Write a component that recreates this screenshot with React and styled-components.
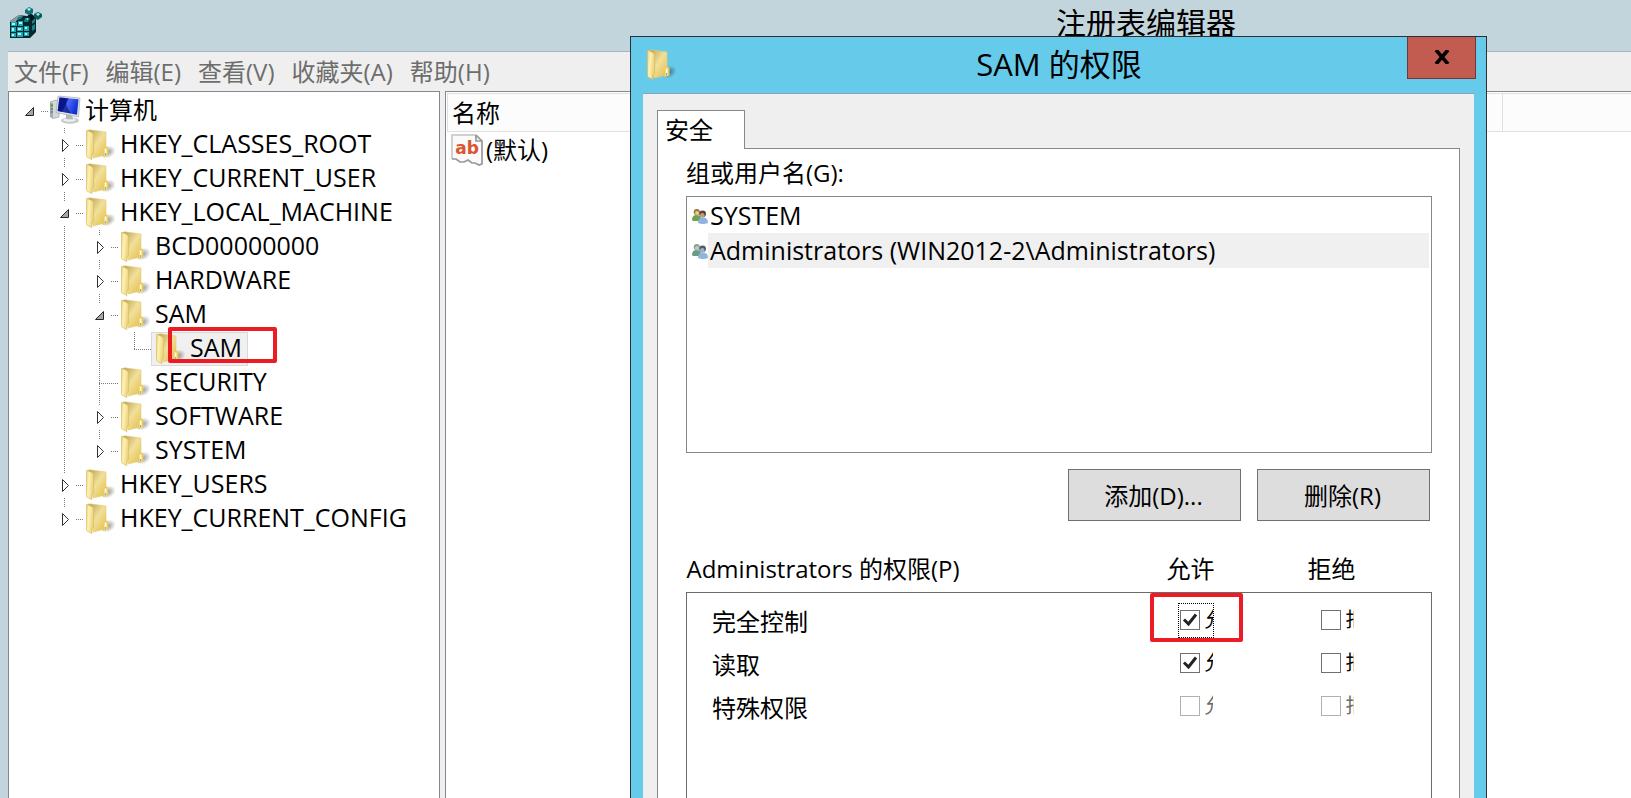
import React from "react";
import styled, { createGlobalStyle } from "styled-components";

const menus = ["文件(F)", "编辑(E)", "查看(V)", "收藏夹(A)", "帮助(H)"];

const registry = {
  name: "计算机",
  open: true,
  computer: true,
  children: [
    { name: "HKEY_CLASSES_ROOT", open: false },
    { name: "HKEY_CURRENT_USER", open: false },
    {
      name: "HKEY_LOCAL_MACHINE",
      open: true,
      children: [
        { name: "BCD00000000", open: false },
        { name: "HARDWARE", open: false },
        {
          name: "SAM",
          open: true,
          children: [{ name: "SAM", leaf: true, selected: true }],
        },
        { name: "SECURITY", leaf: true },
        { name: "SOFTWARE", open: false },
        { name: "SYSTEM", open: false },
      ],
    },
    { name: "HKEY_USERS", open: false },
    { name: "HKEY_CURRENT_CONFIG", open: false },
  ],
};

const permissions = [
  { name: "完全控制", allow: true, focused: true },
  { name: "读取", allow: true },
  { name: "特殊权限", allow: false, disabled: true },
];

function IconDefs() {
  return (
    <HiddenSvg aria-hidden="true">
      <defs>
        <linearGradient id="flap" x1="0" y1="0" x2="1" y2="0.3">
          <stop offset="0" stopColor="#e9cf74" />
          <stop offset="0.4" stopColor="#fff2b8" />
          <stop offset="1" stopColor="#ecd27a" />
        </linearGradient>
        <linearGradient id="back" x1="0" y1="0" x2="1" y2="1">
          <stop offset="0" stopColor="#b39a4c" />
          <stop offset="0.5" stopColor="#f2e09a" />
          <stop offset="1" stopColor="#e3bd45" />
        </linearGradient>
        <radialGradient id="shade">
          <stop offset="0" stopColor="#000" stopOpacity="0.4" />
          <stop offset="1" stopColor="#000" stopOpacity="0" />
        </radialGradient>
        <linearGradient id="screen" x1="0" y1="0" x2="1" y2="0.4">
          <stop offset="0" stopColor="#0a1fa8" />
          <stop offset="0.45" stopColor="#0c1cc0" />
          <stop offset="0.5" stopColor="#4d6cf0" />
          <stop offset="1" stopColor="#1230d8" />
        </linearGradient>
      </defs>
    </HiddenSvg>
  );
}

function FolderIcon() {
  return (
    <svg width="32" height="32" viewBox="-1 0 32 32" aria-hidden="true">
      <ellipse cx="22" cy="23" rx="8" ry="6" fill="url(#shade)" transform="rotate(-28 22 23)" />
      <path d="M1 1.5 L4 .8 L20 3 V26 L7 29 Z" fill="url(#back)" stroke="#e3cd7e" strokeWidth=".6" />
      <path d="M18.5 19 Q18.5 17.5 20 17.5 L21.5 18 Q22.5 18.5 22.5 20 V26.5 L17 28.3 Z" fill="#eccb59" />
      <path d="M19.6 19.5 V26.5" stroke="#fffbe6" strokeWidth="1.8" />
      <path d="M19.6 24 V26.5" stroke="#6fa6c9" strokeWidth="1" />
      <path d="M.5 2 Q.5 1 1.5 1.5 L6.5 4 Q7.6 5 7.6 6.5 V24.5 L5.8 25.5 V30.6 L1 28 Q.5 27.5 .5 26.5 Z" fill="url(#flap)" stroke="#d9bd62" strokeWidth=".7" />
    </svg>
  );
}

function ComputerIcon() {
  return (
    <svg width="32" height="32" viewBox="1 1 32 32" aria-hidden="true">
      <ellipse cx="21" cy="26.500" rx="9" ry="3.200" fill="#c4c8cb" />
      <ellipse cx="20.500" cy="25.800" rx="6.500" ry="2" fill="#eceeef" />
      <path d="M17 20 L23 20.500 L24 25.500 L17 25 Z" fill="#b3b8bb" />
      <path d="M1 8 L7 6 L10 7 V23 L4 24.500 L1 22.500 Z" fill="#d5d8da" stroke="#9ba0a3" strokeWidth=".7" />
      <path d="M1 8 L4 9 V24.500 L1 22.500 Z" fill="#a8adb0" />
      <path d="M1.500 11.500 H4" stroke="#39b02c" strokeWidth="2.200" />
      <path d="M1.500 15 H4 M1.500 18 H4" stroke="#5f6568" />
      <path d="M9 2 L31 4 L29.500 23 L7 18.500 Z" fill="#dfe3e6" stroke="#a5abb0" strokeWidth=".7" />
      <path d="M10.500 3.500 L29.500 5.300 L28 20.800 L8.700 17 Z" fill="url(#screen)" />
      <path d="M10.500 3.500 L17 4.100 Q16 12 22 19.600 L8.700 17 Z" fill="#081070" opacity=".6" />
    </svg>
  );
}

function RegistryIcon() {
  return (
    <svg width="32" height="32" viewBox="0 0 32 32" aria-hidden="true">
      <path d="M0 14 L9 8 L17 9 L21 7 L26 10 V25 L20 31 H0 Z" fill="#06282c" />
      <path d="M0 14 L9 8 L13 9 L6 14 V15 H0 Z" fill="#8c9a9c" />
      <g fill="#18a9b0">
        <path d="M1 15 H7 V19 H1 Z M8 14 H13 V19 H8 Z M1 20 H6 V25 H1 Z M7 20 H13 V24 H7 Z M14 19 H19 V24 H14 Z M1 26 H6 V30 H1 Z M7 25 H13 V30 H7 Z M14 25 H19 V29 H14 Z" />
        <path d="M8 10 L13 9 L11 12 L7 13 Z M15 11 L20 11 L18 15 L14 15 Z M22 12 L25 10 V15 L22 17 Z M22 19 L25 17 V22 L22 24 Z" fill="#12858c" />
        <path d="M15 3 L19 0 L23 2 V6 L19 8 L15 6 Z" fill="#0d7077" />
        <path d="M24 7 L28 5 L32 7 V10 L28 13 L24 11 Z" fill="#0b5b61" />
      </g>
      <g fill="#a5f8f7">
        <path d="M2 16 H5 V18 H2 Z M9 15 H12 V17 H9 Z M2 21 H4 V24 H2 Z M8 21 H11 V23 H8 Z M15 20 H17 V22 H15 Z M2 27 H4 V29 H2 Z M8 26 H11 V28 H8 Z M15 26 H17 V28 H15 Z" />
        <path d="M17 2 L19 1 L21 2 L19 4 Z M26 7 L28 6 L30 7 L28 9 Z M16 12 L18 11 V13 Z" />
      </g>
      <path d="M18 8 L22 7 L25 11 L22 14 Z" fill="#031315" />
    </svg>
  );
}

function StringValueIcon() {
  return (
    <svg width="32" height="32" viewBox="0 0 32 32" aria-hidden="true">
      <path d="M1 1 H25 L31 7 V30 L28 31 L24 29 L21 29 L17 26 L13 28 L9 28 L5 25 L1 25 Z" fill="#fafafa" />
      <path d="M1 25 V1 H25" fill="none" stroke="#d0d0d0" strokeWidth="2" />
      <path d="M25 1 V7 H31 V30 L28 31 L24 29 L21 29 L17 26 L13 28 L9 28 L5 25 H1 M25 1 L31 7" fill="none" stroke="#989898" strokeWidth="1.700" />
      <text x="16" y="20" textAnchor="middle" fontFamily="DejaVu Sans" fontWeight="bold" fontSize="17" fill="#dc5430">ab</text>
    </svg>
  );
}

function UsersIcon({ muted }) {
  return (
    <svg width="16" height="16" viewBox="0 0 16 16" aria-hidden="true">
      <path d="M0 12 Q0 7 4.500 7 Q8 7 9 10 L7 13 H1 Z" fill={muted ? "#6b9c85" : "#6fa54a"} />
      <circle cx="4.800" cy="4" r="3.100" fill={muted ? "#929c94" : "#9b7430"} />
      <circle cx="5" cy="5" r="2" fill={muted ? "#bccbc4" : "#eccb96"} />
      <path d="M6 15 Q6 9.500 11 9.500 Q16 9.500 16 15 Q11 17 6 15 Z" fill={muted ? "#8fb4dd" : "#8eb2e2"} />
      <circle cx="10.600" cy="5.800" r="3.400" fill={muted ? "#4f5c6b" : "#574637"} />
      <circle cx="10.300" cy="7.300" r="2.200" fill={muted ? "#9db1bf" : "#c99a70"} />
    </svg>
  );
}

function Guide({ node, isLast, isRoot }) {
  return (
    <GuideSvg width="34" height="34" viewBox="0 0 34 34" aria-hidden="true">
      <g stroke="#7a7a7a" strokeDasharray="1 1" shapeRendering="crispEdges">
        {!isRoot && <path d={node.leaf ? "M17.500 0 V17" : "M17.500 0 V5"} />}
        {!isRoot && !isLast && <path d={node.leaf ? "M17.500 18 V34" : "M17.500 30 V34"} />}
        <path d={node.leaf ? "M17 17.500 H36" : "M29 17.500 H36"} />
      </g>
      {node.open === true && <path d="M21.500 13.500 V21.500 H13.500 Z" fill="#a6a6a6" stroke="#262626" />}
      {node.open === false && <path d="M15.500 11.500 L21.500 17.500 L15.500 23.500 Z" fill="#fff" stroke="#333" />}
    </GuideSvg>
  );
}

function TreeNode({ node, trail = [], isLast = true, isRoot = false }) {
  return (
    <li role="treeitem" aria-expanded={node.leaf ? undefined : node.open}>
      <TreeRow>
        {trail.map((line, i) => (
          <svg key={i} width="35" height="34" aria-hidden="true">
            {line && <path d="M17.500 0 V34" stroke="#7a7a7a" strokeDasharray="1 1" shapeRendering="crispEdges" />}
          </svg>
        ))}
        <Guide node={node} isLast={isLast} isRoot={isRoot} />
        <NodeLabel $selected={node.selected} $root={isRoot}>
          {node.computer ? <ComputerIcon /> : <FolderIcon />}
          <span>{node.name}</span>
          {node.selected && <KeyMark />}
        </NodeLabel>
      </TreeRow>
      {node.children && (
        <TreeList role="group">
          {node.children.map((child, i) => (
            <TreeNode
              key={child.name}
              node={child}
              trail={[...trail, !isRoot && !isLast]}
              isLast={i === node.children.length - 1}
            />
          ))}
        </TreeList>
      )}
    </li>
  );
}

function PermissionCheck({ text, checked, disabled, focused }) {
  return (
    <CheckLabel $focused={focused} $disabled={disabled}>
      <input type="checkbox" defaultChecked={checked} disabled={disabled} />
      <svg width="20" height="20" viewBox="0 0 20 20" aria-hidden="true">
        <path d="M4 9.500 L8.500 14 L16 4.500" fill="none" stroke="#222" strokeWidth="3" />
      </svg>
      <span>{text}</span>
    </CheckLabel>
  );
}

function PermissionDialog() {
  return (
    <Dialog role="dialog" aria-labelledby="dialog-title">
      <DialogBar>
        <FolderIcon />
        <DialogTitle id="dialog-title">SAM 的权限</DialogTitle>
        <CloseButton aria-label="关闭">
          <svg width="16" height="14" viewBox="0 0 16 14" aria-hidden="true">
            <path d="M2 0 L14 14 M14 0 L2 14" stroke="#000" strokeWidth="3.600" />
          </svg>
        </CloseButton>
      </DialogBar>
      <DialogBody>
        <Tab role="tab" aria-selected="true">安全</Tab>
        <TabPane role="tabpanel">
          <FieldLabel id="group-label">组或用户名(G):</FieldLabel>
          <GroupList role="listbox" aria-labelledby="group-label">
            <Group role="option" aria-selected="false">
              <UsersIcon />
              <span>SYSTEM</span>
            </Group>
            <Group role="option" aria-selected="true" $selected>
              <UsersIcon muted />
              <span>Administrators (WIN2012-2\Administrators)</span>
            </Group>
          </GroupList>
          <ButtonRow>
            <PushButton>添加(D)...</PushButton>
            <PushButton>删除(R)</PushButton>
          </ButtonRow>
          <PermissionTable>
            <thead>
              <tr>
                <th>Administrators 的权限(P)</th>
                <CheckHead $width={141}>允许</CheckHead>
                <CheckHead $width={172}>拒绝</CheckHead>
              </tr>
            </thead>
            <tbody>
              {permissions.map((p) => (
                <tr key={p.name}>
                  <NameCell>{p.name}</NameCell>
                  <CheckCell>
                    {p.focused && <AllowMark />}
                    <PermissionCheck text="允许" checked={p.allow} disabled={p.disabled} focused={p.focused} />
                  </CheckCell>
                  <CheckCell>
                    <PermissionCheck text="拒绝" disabled={p.disabled} />
                  </CheckCell>
                </tr>
              ))}
            </tbody>
          </PermissionTable>
        </TabPane>
      </DialogBody>
    </Dialog>
  );
}

function App() {
  return (
    <Desktop>
      <GlobalStyle />
      <IconDefs />
      <TitleBar>
        <RegistryIcon />
        <h1>注册表编辑器</h1>
      </TitleBar>
      <Frame>
        <MenuBar>
          {menus.map((menu) => (
            <MenuButton key={menu}>{menu}</MenuButton>
          ))}
        </MenuBar>
        <Panels>
          <TreePanel>
            <TreeList role="tree">
              <TreeNode node={registry} isRoot />
            </TreeList>
          </TreePanel>
          <ValuePanel>
            <ValueHeader>
              <div>名称</div>
            </ValueHeader>
            <ValueRow>
              <StringValueIcon />
              (默认)
            </ValueRow>
          </ValuePanel>
        </Panels>
      </Frame>
      <PermissionDialog />
    </Desktop>
  );
}

const GlobalStyle = createGlobalStyle`
  * {
    box-sizing: border-box;
  }
  body {
    margin: 0;
    font-family: "Open Sans", "Noto Sans CJK SC", sans-serif;
    font-size: 24px;
    color: #000;
  }
  button, input {
    font: inherit;
    color: inherit;
    margin: 0;
    padding: 0;
  }
  svg {
    display: block;
    flex: none;
  }
`;

const HiddenSvg = styled.svg`
  position: absolute;
  width: 0;
  height: 0;
`;

const Desktop = styled.div`
  position: relative;
  height: 100vh;
  display: flex;
  flex-direction: column;
  overflow: hidden;
  background: #c3d5dc;
`;

const TitleBar = styled.header`
  display: flex;
  height: 51px;
  padding: 7px 10px 0;
  h1 {
    margin: 0 0 0 1014px;
    font-size: 30px;
    line-height: 32px;
    font-weight: 400;
    white-space: nowrap;
  }
`;

const Frame = styled.div`
  flex: 1;
  min-height: 0;
  display: flex;
  flex-direction: column;
  margin-left: 8px;
  border-top: 1px solid #a9b4c0;
  background: #efefef;
`;

const MenuBar = styled.nav`
  display: flex;
  gap: 17px;
  height: 39px;
  padding-left: 6px;
`;

const MenuButton = styled.button`
  border: 0;
  background: none;
  color: #6d6d6d;
  line-height: 36px;
  white-space: nowrap;
`;

const Panels = styled.div`
  flex: 1;
  min-height: 0;
  display: flex;
  gap: 5px;
`;

const TreePanel = styled.div`
  width: 432px;
  flex: none;
  padding: 2px 0 0 3px;
  background: #fff;
  border: 1px solid #828790;
  border-bottom: 0;
`;

const TreeList = styled.ul`
  margin: 0;
  padding: 0;
  list-style: none;
`;

const TreeRow = styled.div`
  display: flex;
  height: 34px;
`;

const GuideSvg = styled.svg`
  overflow: visible;
`;

const NodeLabel = styled.span`
  position: relative;
  display: flex;
  gap: 3px;
  padding: 0 5px 0 3px;
  border: 1px solid ${(props) => (props.$selected ? "#d9d9d9" : "transparent")};
  background: ${(props) => (props.$selected ? "#f0f0f0" : "none")};
  font-size: ${(props) => (props.$root ? 24 : 25)}px;
  line-height: ${(props) => (props.$root ? 30 : 28)}px;
  white-space: nowrap;
`;

const RedMark = styled.span`
  position: absolute;
  border: 4px solid #ed1c24;
  border-radius: 2px;
  pointer-events: none;
`;

const KeyMark = styled(RedMark)`
  top: -6px;
  left: 16px;
  width: 109px;
  height: 36px;
`;

const ValuePanel = styled.div`
  flex: 1;
  padding: 1px 0 0 1px;
  background: #fff;
  border-top: 1px solid #828790;
  border-left: 1px solid #828790;
`;

const ValueHeader = styled.div`
  display: flex;
  height: 39px;
  background: #fcfcfc;
  border: 1px solid #e0e0e0;
  border-right: 0;
  div {
    width: 1055px;
    padding-left: 4px;
    border-right: 1px solid #e0e0e0;
    line-height: 38px;
  }
`;

const ValueRow = styled.div`
  display: flex;
  align-items: center;
  gap: 3px;
  padding-left: 4px;
  line-height: 36px;
`;

const Dialog = styled.section`
  position: absolute;
  top: 36px;
  left: 630px;
  bottom: 0;
  width: 857px;
  display: flex;
  flex-direction: column;
  overflow: hidden;
  background: #66caea;
  border: 1px solid #2e3033;
  border-bottom: 0;
`;

const DialogBar = styled.div`
  display: grid;
  grid-template-columns: 1fr auto 1fr;
  align-items: center;
  flex: none;
  height: 56px;
  padding: 0 10px 0 15px;
`;

const DialogTitle = styled.h2`
  margin: 0;
  padding: 0 4px 2px 0;
  font-size: 31px;
  font-weight: 400;
  line-height: 54px;
`;

const CloseButton = styled.button`
  display: grid;
  place-items: center;
  align-self: start;
  justify-self: end;
  width: 69px;
  height: 42px;
  padding-bottom: 2px;
  border: 1px solid #6b3b38;
  border-top: 0;
  background: #c25b50;
`;

const DialogBody = styled.div`
  flex: 1;
  min-height: 0;
  display: flex;
  flex-direction: column;
  align-items: flex-start;
  margin: 0 12px;
  padding: 16px 14px 0;
  border-top: 1px solid #86a6b4;
  background: #efefef;
`;

const Tab = styled.button`
  position: relative;
  flex: none;
  width: 88px;
  height: 39px;
  margin-bottom: -1px;
  padding-left: 7px;
  border: 1px solid #828790;
  border-bottom: 0;
  background: #fff;
  text-align: left;
  line-height: 36px;
`;

const TabPane = styled.div`
  flex: 1;
  min-height: 0;
  align-self: stretch;
  padding: 8px 27px 0 28px;
  background: #fff;
  border: 1px solid #828790;
  border-bottom: 0;
`;

const FieldLabel = styled.div`
  margin-bottom: 7px;
  line-height: 32px;
`;

const GroupList = styled.ul`
  height: 257px;
  margin: 0;
  padding: 1px 2px 0 5px;
  list-style: none;
  border: 1px solid #828790;
`;

const Group = styled.li`
  display: flex;
  align-items: center;
  height: 35px;
  font-size: 25px;
  span {
    flex: 1;
    padding-left: 2px;
    line-height: 35px;
    background: ${(props) => (props.$selected ? "#f0f0f0" : "none")};
  }
`;

const ButtonRow = styled.div`
  display: flex;
  justify-content: flex-end;
  gap: 16px;
  padding: 16px 2px 23px 0;
`;

const PushButton = styled.button`
  width: 173px;
  height: 52px;
  padding: 0 2px 2px 0;
  border: 1px solid #707070;
  background: #ddd;
`;

const PermissionTable = styled.table`
  width: 100%;
  border-collapse: collapse;
  th {
    height: 48px;
    padding: 0;
    font-weight: 400;
    text-align: left;
  }
  td {
    height: 43px;
    padding: 0;
    vertical-align: top;
  }
  tbody {
    border: 1px solid #6b6b6b;
  }
  tbody tr:first-child td {
    padding-top: 7px;
  }
  tbody tr:last-child td {
    height: 180px;
  }
`;

const CheckHead = styled.th`
  width: ${(props) => props.$width}px;
  && {
    padding-left: 48px;
  }
`;

const NameCell = styled.td`
  && {
    padding-left: 25px;
  }
  line-height: 43px;
`;

const CheckCell = styled.td`
  position: relative;
  && {
    padding-left: 59px;
  }
`;

const AllowMark = styled(RedMark)`
  top: 0;
  left: 31px;
  width: 93px;
  height: 49px;
`;

const CheckLabel = styled.label`
  display: grid;
  grid-template-columns: 20px 8px;
  column-gap: 5px;
  align-items: center;
  width: 36px;
  height: 35px;
  margin: 3px 0 0;
  padding-left: 1px;
  border: 1px dotted ${(props) => (props.$focused ? "#000" : "transparent")};
  color: ${(props) => (props.$disabled ? "#6d6d6d" : "#000")};
  input {
    grid-area: 1 / 1;
    appearance: none;
    width: 20px;
    height: 20px;
    background: #fff;
    border: 1px solid ${(props) => (props.$disabled ? "#adb2b5" : "#707070")};
  }
  svg {
    grid-area: 1 / 1;
    visibility: hidden;
    pointer-events: none;
  }
  input:checked + svg {
    visibility: visible;
  }
  span {
    overflow: hidden;
    white-space: nowrap;
    font-size: 20px;
    line-height: 30px;
  }
`;

export default App;
